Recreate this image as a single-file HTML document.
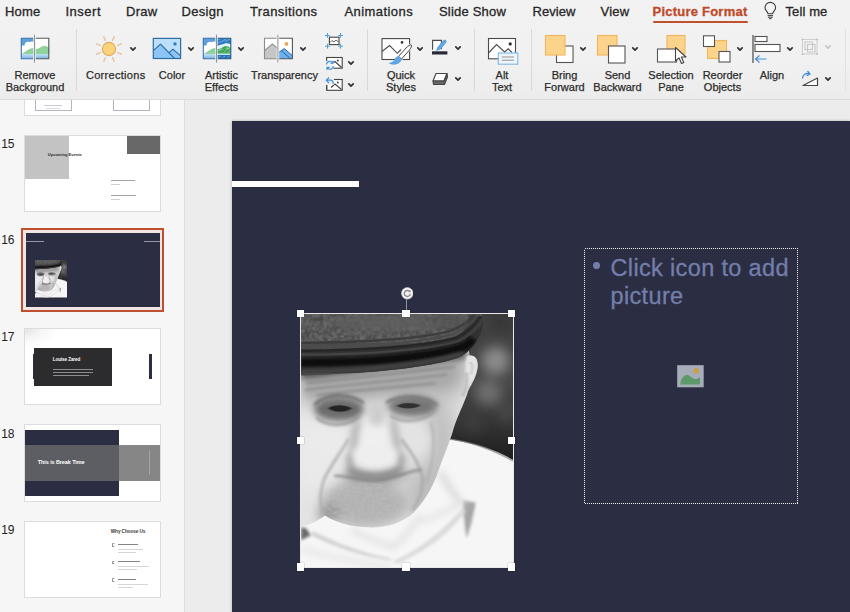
<!DOCTYPE html>
<html><head><meta charset="utf-8">
<style>
*{margin:0;padding:0;box-sizing:border-box}
html,body{width:850px;height:612px;overflow:hidden;background:#ececec;font-family:"Liberation Sans",sans-serif;color:#2a2a2a}
.abs{position:absolute}
#ribbon{position:absolute;left:0;top:0;width:850px;height:100px;box-sizing:border-box;background:linear-gradient(#f2f2f2 0,#f1f1f1 60px,#ececec 98px);border-bottom:1px solid #dcdcdc}
.tab{-webkit-text-stroke:0.300px;position:absolute;top:4px;font-size:13px;line-height:16px;white-space:nowrap;color:#262626}
.lbl{-webkit-text-stroke:0.250px #2b2b2b;margin-top:-.7px;position:absolute;font-size:11px;line-height:12.200px;text-align:center;white-space:nowrap;color:#2b2b2b;transform:translateX(-50%)}
.sep{position:absolute;top:29px;width:1px;height:62px;background:#d9d9d9}
.chev{position:absolute;width:8px;height:5px}
#panel{position:absolute;left:0;top:100px;width:184.800px;height:512px;background:#f6f6f6;border-right:1px solid #dedede;overflow:hidden}
.num{position:absolute;left:1.300px;font-size:12px;line-height:14px;color:#222;letter-spacing:-.2px}
.tiny{white-space:nowrap;line-height:1;letter-spacing:-.1px}
.ic{width:3.600px;height:3.600px;border:.8px solid #8c8c8c;border-radius:50%;border-right-color:transparent}
.thumb{position:absolute;left:25.300px;width:135px;height:75.800px;background:#fff;outline:1px solid #dcdcdc;outline-offset:-.5px;overflow:hidden}
#edit{position:absolute;left:185px;top:100px;width:665px;height:512px;background:#ececec}
#slide{position:absolute;left:232px;top:121px;width:618px;height:491px;background:#2b2e42;box-shadow:0 0 3px rgba(0,0,0,.25)}
.hd{position:absolute;width:7.500px;height:7.500px;background:#fff;box-shadow:0 0 1px rgba(0,0,0,.5)}
</style></head><body>
<svg width="0" height="0" style="position:absolute"><defs><g id="photo">
<defs>
<filter id="b1" x="-20%" y="-20%" width="140%" height="140%"><feGaussianBlur stdDeviation="0.800"/></filter>
<filter id="b2" x="-20%" y="-20%" width="140%" height="140%"><feGaussianBlur stdDeviation="1.800"/></filter>
<filter id="b3" x="-30%" y="-30%" width="160%" height="160%"><feGaussianBlur stdDeviation="3.500"/></filter>
<filter id="b6" x="-40%" y="-40%" width="180%" height="180%"><feGaussianBlur stdDeviation="6"/></filter>
<filter id="b10" x="-50%" y="-50%" width="200%" height="200%"><feGaussianBlur stdDeviation="10"/></filter>
<filter id="grain" x="0" y="0" width="100%" height="100%"><feTurbulence type="fractalNoise" baseFrequency=".280" numOctaves="3" seed="4" result="n"/><feColorMatrix in="n" type="matrix" values="0 0 0 0 .55  0 0 0 0 .55  0 0 0 0 .55  1.200 1.200 1.200 0 -1.400"/></filter>
<filter id="grain2" x="0" y="0" width="100%" height="100%"><feTurbulence type="fractalNoise" baseFrequency=".220" numOctaves="3" seed="9" result="n"/><feColorMatrix in="n" type="matrix" values="0 0 0 0 .33  0 0 0 0 .33  0 0 0 0 .33  1.200 1.200 1.200 0 -1.350"/></filter>
<linearGradient id="bgg" x1="0" y1="0" x2="0" y2="1"><stop offset="0" stop-color="#3f3f3f"/><stop offset=".45" stop-color="#484848"/><stop offset=".75" stop-color="#333"/><stop offset="1" stop-color="#1a1a1a"/></linearGradient>
<clipPath id="pc"><rect width="213" height="256"/></clipPath>
<clipPath id="facec"><path d="M0 50 L168 36 L169 43 C176 42 179 50 176 60 C173 71 168 75 166.500 82 C163 92 157 104 153 116 C150 128 143 144 138 158 C133 174 124 190 112 202 C100 212 84 217 66 216 C46 215 34 210 24 204 C16 210 8 214 0 215z"/></clipPath>
</defs>
<g clip-path="url(#pc)">
<rect width="213" height="256" fill="#efefef"/>
<!-- background -->
<rect x="130" y="0" width="83" height="152" fill="url(#bgg)"/>
<g filter="url(#b6)"><circle cx="195" cy="48" r="14" fill="#8a8a8a"/><circle cx="188" cy="80" r="13" fill="#6e6e6e"/><circle cx="206" cy="100" r="9" fill="#484848"/><circle cx="202" cy="10" r="12" fill="#383838"/><circle cx="172" cy="110" r="10" fill="#3c3c3c"/></g>
<!-- shirt -->
<path d="M120 124 C160 126.500 195 137 214 149 V256 H0 V200z" fill="#f6f6f6"/>
<path d="M146 127 C170 129 196 139 214 150" fill="none" stroke="#8a8a8a" stroke-width="1.200" filter="url(#b1)"/>
<!-- collar shading -->
<g filter="url(#b2)">
<path d="M162 189 L175 191 C173 204 170 216 166 227 C164 215 163 203 162 189z" fill="#a6a6a6"/>
<path d="M0 216 L5 217 L10 224 L0 229z" fill="#6a6a6a"/>
<path d="M12 220 C36 232 62 242 88 247 L92 250 C62 246 34 236 10 224z" fill="#d2d2d2"/>
<path d="M92 250 C120 238 146 216 162 196 L165 200 C150 222 122 242 96 253z" fill="#dcdcdc"/>
</g>
<g filter="url(#b3)" fill="none" stroke="#cdcdcd" stroke-width="3">
<path d="M140 160 C147 175 154 186 163 193" stroke="#dcdcdc" stroke-width="7"/>
<path d="M50 219 C66 226 80 232 92 236 C102 228 112 216 120 204" stroke="#e0e0e0" stroke-width="5"/>
<path d="M0 238 C30 246 60 252 90 256" stroke="#e8e8e8" stroke-width="6"/>
<path d="M120 210 C135 205 150 198 160 192" stroke="#e6e6e6" stroke-width="6"/>
</g>
<!-- face -->
<g clip-path="url(#facec)">
<rect width="213" height="256" fill="#e3e3e3"/>
<g filter="url(#b10)">
<ellipse cx="14" cy="140" rx="24" ry="44" fill="#eaeaea"/>
<ellipse cx="141" cy="130" rx="14" ry="48" fill="#bcbcbc"/>
<ellipse cx="122" cy="182" rx="17" ry="28" fill="#bababa"/>
<ellipse cx="152" cy="72" rx="14" ry="20" fill="#dadada"/>
<path d="M0 56 L166 36 L162 78 L0 92z" fill="#a2a2a2"/>
</g>
<g filter="url(#b6)">
<ellipse cx="73" cy="130" rx="20" ry="26" fill="#efefef"/>
<ellipse cx="117" cy="128" rx="13" ry="15" fill="#e4e4e4"/>
<ellipse cx="30" cy="130" rx="18" ry="16" fill="#ebebeb"/>
<ellipse cx="64" cy="192" rx="44" ry="24" fill="#b2b2b2"/>
<ellipse cx="75" cy="164" rx="34" ry="7" fill="#a8a8a8"/>
<ellipse cx="28" cy="202" rx="10" ry="9" fill="#8c8c8c"/>
</g>
<g filter="url(#b3)">
<path d="M0 60 L166 38 L166 45 L0 67z" fill="#3a3a3a"/>
<path d="M4 70 L150 54 L146 72 L6 84z" fill="#ababab"/>
<ellipse cx="38" cy="97" rx="25" ry="12" fill="#6c6c6c"/>
<ellipse cx="112" cy="94" rx="25" ry="11" fill="#747474"/>
<ellipse cx="76" cy="102" rx="9" ry="12" fill="#cdcdcd"/>
<path d="M48 154 C60 164 88 164 100 153 L102 160 C88 169 60 169 46 161z" fill="#7a7a7a"/>
<ellipse cx="50" cy="148" rx="4" ry="8" fill="#9a9a9a"/><path d="M54 108 C50 118 50 128 48 138 L56 138 C56 128 58 118 60 108z" fill="#b0b0b0"/><path d="M94 106 C98 118 99 128 101 138 L94 138 C92 128 91 118 89 108z" fill="#b0b0b0"/>
<ellipse cx="100" cy="148" rx="4" ry="8" fill="#9a9a9a"/>
</g>
<g filter="url(#b3)"><ellipse cx="74" cy="145" rx="22" ry="12" fill="#eeeeee"/></g>
<g filter="url(#b2)" fill="none" stroke-linecap="round">
<path d="M14 92 C26 81 48 81 62 90" stroke="#6a6a6a" stroke-width="2.500"/>
<path d="M86 90 C100 82 122 83 136 92" stroke="#757575" stroke-width="2.500"/>
<path d="M16 106 C28 116 48 114 58 104" stroke="#929292" stroke-width="2.200"/>
<path d="M90 104 C104 112 122 109 132 100" stroke="#9a9a9a" stroke-width="2.200"/>
<path d="M47 128 C38 144 28 156 23 168 C19 180 18 190 22 200" stroke="#acacac" stroke-width="2.400"/>
<path d="M101 128 C112 142 120 154 122 168 C122 180 118 190 112 198" stroke="#a8a8a8" stroke-width="2.400"/>
<path d="M34 164 C46 164 58 169 76 168.500 C92 168 104 160 120 158" stroke="#808080" stroke-width="2.200"/>
<path d="M6 71 C40 67 100 61 154 54M4 77.500 C50 72 100 67.500 146 62M16 83 C50 78 90 75.500 134 71" stroke="#767676" stroke-width="1.300"/>
<path d="M130 110 C136 130 132 150 126 170" stroke="#b0b0b0" stroke-width="2"/>
</g>
<g filter="url(#b1)">
<path d="M27 96 C32 92 44 92 51 96 C46 100.500 33 101 27 96z" fill="#1e1e1e" opacity=".92"/>
<path d="M96 93.500 C102 90 112 90 120 93 C114 97 102 97.500 96 93.500z" fill="#2a2a2a" opacity=".9"/>
<path d="M166 44 C172 40 178 44 177 54 C176 64 171 70 167 74 C165 64 164 52 166 44z" fill="#e4e4e4"/><path d="M169 50 C172 50 173 56 170 62" stroke="#bdbdbd" stroke-width="1.500" fill="none"/>
<path d="M166 60 C168 68 166 76 162 84" stroke="#b8b8b8" stroke-width="2" fill="none"/>
</g>
<clipPath id="chinc"><ellipse cx="64" cy="193" rx="42" ry="22"/></clipPath><g clip-path="url(#chinc)"><rect x="14" y="166" width="106" height="52" filter="url(#grain)" opacity=".4"/></g>

</g>
<!-- hat -->
<path id="hatp" d="M0 0 H180.500 C184 8 183 18 177 27 C172 35 166 41 160 44 C140 52 100 57 60 60 C30 62 10 63 0 63z" fill="#4b4b4b"/>
<clipPath id="hatc"><use href="#hatp"/></clipPath>
<g clip-path="url(#hatc)">
<rect width="190" height="30" filter="url(#grain2)" opacity=".4"/>
<g filter="url(#b6)"><ellipse cx="85" cy="9" rx="55" ry="8" fill="#5e5e5e"/><ellipse cx="150" cy="8" rx="20" ry="8" fill="#545454"/></g>
<g filter="url(#b1)" fill="none">
<path d="M0 51 C60 51 120 47 156 37 C170 32 179 22 182 4" stroke="#303030" stroke-width="25"/>
</g>
<g filter="url(#b1)" fill="none">
<path d="M0 30 C60 30 120 26 150 18 C165 12 172 6 175 -2" stroke="#3c3c3c" stroke-width="2.500"/>
<path d="M0 34 C60 34 121 30 152 21.500 C166 15.500 174 8 178 0" stroke="#4c4c4c" stroke-width="2.500"/>
<path d="M0 38 C60 38 122 34 155 25 C168 19 176 11 180 3" stroke="#262626" stroke-width="2.500"/>
<path d="M0 42 C60 42 124 38 158 28.500 C170 22 178 14 182 6" stroke="#454545" stroke-width="2.200"/>
</g>
<g filter="url(#b2)" fill="none">
<path d="M0 50 C60 50 120 46 160 35 C166 33 170 30 173 26" stroke="#0c0c0c" stroke-width="9"/>
<path d="M0 59.500 C60 58.500 120 52.500 162 41" stroke="#444" stroke-width="4"/>
</g>
</g>
</g>
</g></defs></svg>
<div id="ribbon">
<div class="tab" style="left:5px;letter-spacing:0.2px">Home</div>
<div class="tab" style="left:65.5px;letter-spacing:0.5px">Insert</div>
<div class="tab" style="left:126px;letter-spacing:0.3px">Draw</div>
<div class="tab" style="left:181.5px;letter-spacing:0.32px">Design</div>
<div class="tab" style="left:250px;letter-spacing:0.39px">Transitions</div>
<div class="tab" style="left:344.5px;letter-spacing:0.43px">Animations</div>
<div class="tab" style="left:439px;letter-spacing:0.2px">Slide Show</div>
<div class="tab" style="left:532.5px;letter-spacing:0.07px">Review</div>
<div class="tab" style="left:600.5px;letter-spacing:0.2px">View</div>
<div class="tab" id="pf" style="left:652.5px;letter-spacing:0.23px;font-weight:bold;color:#bf4a2a">Picture Format</div>
<div class="abs" style="left:652.500px;top:20.800px;width:95.500px;height:2.700px;border-radius:1.500px;background:#c0502e"></div>
<svg class="abs" style="left:763px;top:1px" width="15" height="19" viewBox="0 0 15 19"><path d="M5 12.800C5 10.900 2 9.700 2 6.700A5.300 5.300 0 0 1 12.600 6.700C12.600 9.700 9.600 10.900 9.600 12.800z" fill="none" stroke="#3c3c3c" stroke-width="1.100" stroke-linejoin="round"/><path d="M5 14.600H9.600M5.300 16.200H9.300M6.400 17.700H8.200" stroke="#3c3c3c" stroke-width="1" fill="none" stroke-linecap="round"/></svg>
<div class="tab" style="left:785.5px;letter-spacing:0.11px">Tell me</div>
<svg class="abs" style="left:20px;top:33px" width="31" height="31" viewBox="0 0 31 31">
<defs><linearGradient id="wat" x1="0" y1="0" x2="0" y2="1"><stop offset="0" stop-color="#c4e6f3"/><stop offset="1" stop-color="#7fb1e2"/></linearGradient></defs>
<rect x="1.300" y="5.200" width="27.500" height="20.500" fill="#fff"/>
<rect x="1.300" y="5.200" width="13.200" height="7.500" fill="#5e9fd8"/>
<path d="M1.300 12.800 H4.600 C4.200 9.300 7.500 8 9.500 9.200 C11 8 13.500 8.500 14.500 10 V17 H1.300z" fill="#fff"/>
<path d="M2.500 21 C6 18.500 9 16.500 12 15.600 L14.500 15.700 V21z" fill="#8fd39b" stroke="#6dbb7c" stroke-width=".5"/>
<path d="M14.500 16.200 C17 16.500 18.500 16 20 15 C22 13.500 24 12.800 25.500 13.300 L28.800 14.800 V21 H14.500z" fill="#8fd39b" stroke="#6dbb7c" stroke-width=".5"/>
<rect x="1.300" y="20.800" width="27.500" height="4.900" fill="url(#wat)"/>
<path d="M14.500 5.200 H28.800 V25.700 H14.500" fill="none" stroke="#4f5860" stroke-width="1.100"/>
<path d="M14.500 5.200 H1.300 V25.700 H14.500" fill="none" stroke="#3a74ad" stroke-width="1.100"/>
<path d="M14.500 1.700V29.600" stroke="#f1f1f1" stroke-width="2.600"/>
<path d="M14.500 1.700V29.600" stroke="#8d9296" stroke-width="1"/>
</svg>
<div class="lbl" style="left:35px;top:69.5px">Remove<br>Background</div>
<div class="sep" style="left:76px"></div>
<svg class="abs" style="left:93.300px;top:32.800px" width="32" height="32" viewBox="-16 -16 32 32">
<g stroke="#e9c6a6" stroke-width="1.600" stroke-linecap="round">
<path d="M0 -9.500V-13.300M0 9.500V13.300M-9.500 0H-13.300M9.500 0H13.300M6.700 -6.700L9.400 -9.400M-6.700 -6.700L-9.400 -9.400M6.700 6.700L9.400 9.400M-6.700 6.700L-9.400 9.400" transform="rotate(22.500)"/>
</g>
<circle r="6.600" fill="#fad37c" stroke="#e0a95c" stroke-width="1.100"/>
</svg>
<svg class="abs" style="left:129px;top:46px" width="8" height="6" viewBox="0 0 8 6"><path d="M1.800 1.900L4 4.100L6.200 1.900" fill="none" stroke="#303030" stroke-width="1.700" stroke-linecap="round" stroke-linejoin="round"/></svg>
<div class="lbl" style="left:115.700px;top:69.5px;letter-spacing:.3px">Corrections</div>
<svg class="abs" style="left:152px;top:36px" width="31" height="24" viewBox="0 0 31 24">
<rect x="1.300" y="2.400" width="27.300" height="20.100" fill="#bcdffb"/>
<path d="M1.300 14.600 L8.500 8.100 L22.600 22.500 H1.300z" fill="#8dc6f6"/>
<path d="M17.300 16.300 L20.900 13.200 L28.600 19.900 V22.500 H22.600z" fill="#8dc6f6"/>
<path d="M1.300 14.600 L8.500 8.100 L22.600 22.500M17.300 16.300 L20.900 13.200 L28.600 19.900" fill="none" stroke="#2f6da3" stroke-width="1.100" stroke-linejoin="round"/>
<rect x="1.300" y="2.400" width="27.300" height="20.100" fill="none" stroke="#2f6da3" stroke-width="1.200"/>
<circle cx="23" cy="7.900" r="1.700" fill="#2e7cb6"/>
</svg>
<svg class="abs" style="left:186.5px;top:46px" width="8" height="6" viewBox="0 0 8 6"><path d="M1.800 1.900L4 4.100L6.200 1.900" fill="none" stroke="#303030" stroke-width="1.700" stroke-linecap="round" stroke-linejoin="round"/></svg>
<div class="lbl" style="left:172px;top:69.5px">Color</div>
<svg class="abs" style="left:201.700px;top:33px" width="31" height="31" viewBox="0 0 31 31">
<rect x="1.300" y="5.200" width="27.500" height="20.500" fill="#fff"/>
<rect x="1.300" y="5.200" width="13.200" height="7.500" fill="#5e9fd8"/>
<path d="M1.300 12.800 H4.600 C4.200 9.300 7.500 8 9.500 9.200 C11 8 13.500 8.500 14.500 10 V17 H1.300z" fill="#fff"/>
<path d="M2.500 21 C6 18.500 9 16.500 12 15.600 L14.500 15.700 V21z" fill="#8fd39b" stroke="#6dbb7c" stroke-width=".5"/>
<rect x="1.300" y="20.800" width="13.200" height="4.900" fill="url(#wat)"/>
<rect x="14.500" y="5.200" width="14.300" height="20.500" fill="#2f78bd"/>
<path d="M15 7l4-1.500 M19 9l5-3 M23 8.500l5-2.500M16 10l3-1.500" stroke="#5fa5e2" stroke-width="1.100"/>
<path d="M14.500 13.500 C17 12 20 11.500 23 10.500 C25 10 27 10.500 28.800 11.500 V16 H14.500z" fill="#e2f3fb"/>
<path d="M14.500 17 C17 16.500 18.500 15.500 20.500 14.300 C22.500 13 24.500 12.800 26 13.500 L28.800 15 V21 H14.500z" fill="#58b46a"/>
<path d="M16 19.500l4-2.500M19.500 19.500l4-3.500M23.500 19.500l3.500-3M21 15.500l3-1.500" stroke="#2f8f4c" stroke-width=".9"/>
<path d="M17 17.500l3-1.500M24 15l3 1" stroke="#a5e0a4" stroke-width=".8"/>
<rect x="14.500" y="20.600" width="14.300" height="1.400" fill="#bfe9f3"/>
<rect x="14.500" y="22" width="14.300" height="3.700" fill="#2a6fb2"/>
<path d="M16 24.500l3-1.500M20.500 24.500l3-1.500M25 24.500l2.500-1.500" stroke="#6fb0e6" stroke-width=".8"/>
<path d="M14.500 5.200 H28.800 V25.700 H14.500" fill="none" stroke="#2b5f90" stroke-width="1.100"/>
<path d="M14.500 5.200 H1.300 V25.700 H14.500" fill="none" stroke="#3a74ad" stroke-width="1.100"/>
<path d="M14.500 1.700V29.600" stroke="#e6eef5" stroke-width="2.400"/>
<path d="M14.500 1.700V29.600" stroke="#8d9296" stroke-width="1"/>
</svg>
<svg class="abs" style="left:236.5px;top:46px" width="8" height="6" viewBox="0 0 8 6"><path d="M1.800 1.900L4 4.100L6.200 1.900" fill="none" stroke="#303030" stroke-width="1.700" stroke-linecap="round" stroke-linejoin="round"/></svg>
<div class="lbl" style="left:221.5px;top:69.5px">Artistic<br>Effects</div>
<svg class="abs" style="left:263px;top:33px" width="31" height="31" viewBox="0 0 31 31">
<rect x="1.500" y="5.200" width="27.900" height="20.500" fill="#fff"/>
<path d="M1.500 17.600 L9.300 10.900 L14.900 15.700 V25.700 H1.500z" fill="#c6c6c6"/>
<path d="M1.500 17.600 L9.300 10.900 L14.900 15.700" fill="none" stroke="#8b8b8b" stroke-width="1.100"/>
<path d="M15.500 19.600 L21.300 15.600 L29.400 22.700 V25.700 H15.500z" fill="#6db1ef"/>
<path d="M15.500 19.600 L21.300 15.600 L29.400 22.700M18.300 17.700 L27.500 25.700" fill="none" stroke="#2768a8" stroke-width="1"/>
<circle cx="23.400" cy="10.900" r="1.900" fill="#eaa45a"/>
<path d="M14.900 5.200 H29.400 V25.700 H14.900" fill="none" stroke="#50565c" stroke-width="1.100"/>
<path d="M14.900 5.200 H1.500 V25.700 H14.900" fill="none" stroke="#8b8b8b" stroke-width="1.100"/>
<path d="M14.900 1.700V29.600" stroke="#f1f1f1" stroke-width="2.600"/>
<path d="M14.900 1.700V29.600" stroke="#9a9a9a" stroke-width="1"/>
</svg>
<svg class="abs" style="left:298.5px;top:46px" width="8" height="6" viewBox="0 0 8 6"><path d="M1.800 1.900L4 4.100L6.200 1.900" fill="none" stroke="#303030" stroke-width="1.700" stroke-linecap="round" stroke-linejoin="round"/></svg>
<div class="lbl" style="left:284.5px;top:69.5px">Transparency</div>
<svg class="abs" style="left:325px;top:33px" width="18" height="16" viewBox="0 0 18 16">
<rect x="4.400" y="4.200" width="9.600" height="7.400" fill="#fff" stroke="#444" stroke-width="1.100"/>
<path d="M5 9.500l2-2 2 1.500 2-2 2.500 2" fill="none" stroke="#555" stroke-width=".9"/>
<g stroke="#4ea0dc" stroke-width="1" fill="none"><path d="M0 2.500h4.800M2.500 0v4.800M13.200 2.500h4.800M15.500 0v4.800M0 13.200h4.800M2.500 10.800v4.800M13.200 13.200h4.800M15.500 10.800v4.800"/></g>
</svg>
<svg class="abs" style="left:325px;top:55px" width="18" height="17" viewBox="0 0 18 17">
<rect x="1.700" y="2.500" width="15.500" height="10.700" fill="#fff" stroke="#444" stroke-width="1.100"/>
<path d="M7 8.500 L10 6.500 L16.500 12.500" fill="none" stroke="#444" stroke-width="1.100"/><circle cx="12.800" cy="5.500" r="1" fill="#444"/>
<rect x="0.500" y="5.500" width="8" height="10" fill="#f1f1f1"/>
<rect x="1.700" y="2.500" width="7" height="3.500" fill="#fff"/><path d="M1.700 6V2.500H9" fill="none" stroke="#444" stroke-width="1.100"/>
<path d="M1.500 9.500a3.300 3.300 0 0 1 6-1.800M8 5.500v2.600H5.400" fill="none" stroke="#3f8fe0" stroke-width="1.200"/>
<path d="M8.500 11a3.300 3.300 0 0 1-6 1.800M2 15v-2.600h2.600" fill="none" stroke="#3f8fe0" stroke-width="1.200"/>
</svg>
<svg class="abs" style="left:325px;top:76px" width="18" height="16" viewBox="0 0 18 16">
<rect x="1.700" y="3.500" width="15.500" height="10.800" fill="#fff" stroke="#444" stroke-width="1.100"/>
<path d="M6 11.500 L10 8 L16.500 13.500" fill="none" stroke="#444" stroke-width="1.100"/><circle cx="12.800" cy="6.500" r="1" fill="#444"/>
<rect x="0.500" y="0" width="8.500" height="9" fill="#f1f1f1"/>
<path d="M9 3.500H17.200M1.700 9V14.300" stroke="#444" stroke-width="1.100"/>
<path d="M1.500 4.200H5.500C7.500 4.200 8.500 6 8 8M4 1.500L1.300 4.200L4 7" fill="none" stroke="#3f8fe0" stroke-width="1.200"/>
</svg>
<svg class="abs" style="left:347px;top:60px" width="8" height="6" viewBox="0 0 8 6"><path d="M1.800 1.900L4 4.100L6.200 1.900" fill="none" stroke="#303030" stroke-width="1.700" stroke-linecap="round" stroke-linejoin="round"/></svg>
<svg class="abs" style="left:347px;top:81.5px" width="8" height="6" viewBox="0 0 8 6"><path d="M1.800 1.900L4 4.100L6.200 1.900" fill="none" stroke="#303030" stroke-width="1.700" stroke-linecap="round" stroke-linejoin="round"/></svg>
<div class="sep" style="left:367px"></div>
<svg class="abs" style="left:380px;top:36px" width="34" height="30" viewBox="0 0 34 30">
<rect x="2" y="2.600" width="27.600" height="20.900" fill="#fff" stroke="#4a4a4a" stroke-width="1.100"/>
<path d="M2 15.500 L9.600 9.600 L17.300 17.300 L21 13.500" fill="none" stroke="#4a4a4a" stroke-width="1.100"/>
<circle cx="22" cy="6.400" r="1.300" fill="#333"/>
<path d="M31 9.300 L19 24" stroke="#f1f1f1" stroke-width="5"/>
<path d="M31.300 9 C32 10 31 12 29 14.500 L21.500 23 L18.500 20.500 L26 12 C28 10 30.500 8.500 31.300 9z" fill="#fff" stroke="#4a4a4a" stroke-width="1"/>
<path d="M21.300 23.200 C20.500 27.500 14 29.500 9.500 27.300 C12.500 27 14 25.500 15 23 C16 20.500 19.500 19.500 21.300 23.200z" fill="#62a8e4" stroke="#4b94d8" stroke-width=".7"/>
</svg>
<svg class="abs" style="left:415.5px;top:46px" width="8" height="6" viewBox="0 0 8 6"><path d="M1.800 1.900L4 4.100L6.200 1.900" fill="none" stroke="#303030" stroke-width="1.700" stroke-linecap="round" stroke-linejoin="round"/></svg>
<div class="lbl" style="left:401px;top:69.5px">Quick<br>Styles</div>
<svg class="abs" style="left:431px;top:38px" width="18" height="18" viewBox="0 0 18 18">
<path d="M1.600 11.800V2.400H10.400V11.800" stroke="#4a4a4a" stroke-width="1.100" fill="#fff"/>
<path d="M4.500 13.300h8" stroke="#f1f1f1" stroke-width="4"/>
<path d="M6.800 9.300 L12.500 2.500 C13.500 1.200 16 2.800 15 4.300 L9.500 11 L5.700 12.300z" fill="#62a8e4" stroke="#4b94d8" stroke-width=".8"/>
<rect x="1" y="13.300" width="15.400" height="3.200" fill="#262a36"/>
</svg>
<svg class="abs" style="left:453.5px;top:44.5px" width="8" height="6" viewBox="0 0 8 6"><path d="M1.800 1.900L4 4.100L6.200 1.900" fill="none" stroke="#303030" stroke-width="1.700" stroke-linecap="round" stroke-linejoin="round"/></svg>
<svg class="abs" style="left:431px;top:71px" width="18" height="16" viewBox="0 0 18 16">
<path d="M5 2.500 L16 2.500 L13 10 L2 10z" fill="#fff" stroke="#444" stroke-width="1.100" stroke-linejoin="round"/>
<path d="M2 10 L13 10 L16 2.500 L16.500 6 L13.500 13.500 L2.500 13.500z" fill="#666" stroke="#444" stroke-width="1.100" stroke-linejoin="round"/>
</svg>
<svg class="abs" style="left:453.5px;top:76px" width="8" height="6" viewBox="0 0 8 6"><path d="M1.800 1.900L4 4.100L6.200 1.900" fill="none" stroke="#303030" stroke-width="1.700" stroke-linecap="round" stroke-linejoin="round"/></svg>
<div class="sep" style="left:473.5px"></div>
<svg class="abs" style="left:486px;top:36px" width="34" height="30" viewBox="0 0 34 30">
<rect x="2.500" y="2.500" width="27" height="20.300" fill="#fff" stroke="#4a4a4a" stroke-width="1.100"/>
<path d="M3 16.500 L10.500 8.500 L18.700 16 L22.200 12.800 L26 16.500" fill="none" stroke="#4a4a4a" stroke-width="1.100"/>
<circle cx="24.200" cy="7.900" r="1.600" fill="#2c2c2c"/>
<rect x="12.300" y="17" width="19.500" height="11.200" fill="#edf6fd" stroke="#7db6e4" stroke-width="1.100"/>
<path d="M15.800 21h12.200M15.800 24.200h12.200" stroke="#9c8e86" stroke-width="1"/>
</svg>
<div class="lbl" style="left:502px;top:69.5px">Alt<br>Text</div>
<div class="sep" style="left:530.5px"></div>
<svg class="abs" style="left:544px;top:34px" width="31" height="30" viewBox="0 0 31 30">
<rect x="12.500" y="12" width="16.500" height="16.500" fill="#fff" stroke="#555" stroke-width="1.100"/>
<rect x="1.500" y="1.500" width="19.500" height="19.500" fill="#fbd38a" stroke="#f0b65e" stroke-width="1.100"/>
</svg>
<svg class="abs" style="left:578.5px;top:46px" width="8" height="6" viewBox="0 0 8 6"><path d="M1.800 1.900L4 4.100L6.200 1.900" fill="none" stroke="#303030" stroke-width="1.700" stroke-linecap="round" stroke-linejoin="round"/></svg>
<div class="lbl" style="left:564.5px;top:69.5px">Bring<br>Forward</div>
<svg class="abs" style="left:596px;top:34px" width="31" height="31" viewBox="0 0 31 31">
<rect x="1.500" y="1.500" width="19.500" height="19.500" fill="#fbd38a" stroke="#f0b65e" stroke-width="1.100"/>
<rect x="12.500" y="12" width="16.500" height="17" fill="#fff" stroke="#555" stroke-width="1.100"/>
</svg>
<svg class="abs" style="left:630.8px;top:46px" width="8" height="6" viewBox="0 0 8 6"><path d="M1.800 1.900L4 4.100L6.200 1.900" fill="none" stroke="#303030" stroke-width="1.700" stroke-linecap="round" stroke-linejoin="round"/></svg>
<div class="lbl" style="left:617.5px;top:69.5px">Send<br>Backward</div>
<svg class="abs" style="left:656px;top:34px" width="33" height="32" viewBox="0 0 33 32">
<rect x="11" y="1.500" width="18" height="18.500" fill="#fbd38a" stroke="#f0b65e" stroke-width="1.100"/>
<rect x="1.500" y="15" width="19" height="13" fill="#fff" stroke="#555" stroke-width="1.100"/>
<path d="M19.500 13.500 L19.500 27 L23 23.800 L25.500 29.500 L27.800 28.500 L25.300 23 L30 23z" fill="#fff" stroke="#444" stroke-width="1.100" stroke-linejoin="round"/>
</svg>
<div class="lbl" style="left:671px;top:69.5px">Selection<br>Pane</div>
<svg class="abs" style="left:702px;top:35px" width="30" height="29" viewBox="0 0 30 29">
<rect x="5.500" y="5.500" width="19" height="18" fill="#fbd38a" stroke="#f0b65e" stroke-width="1.100"/>
<rect x="1.500" y=".8" width="11" height="10.700" fill="#fff" stroke="#555" stroke-width="1.100"/>
<rect x="17" y="16.500" width="11" height="10.500" fill="#fff" stroke="#555" stroke-width="1.100"/>
</svg>
<svg class="abs" style="left:736px;top:46px" width="8" height="6" viewBox="0 0 8 6"><path d="M1.800 1.900L4 4.100L6.200 1.900" fill="none" stroke="#303030" stroke-width="1.700" stroke-linecap="round" stroke-linejoin="round"/></svg>
<div class="lbl" style="left:722.5px;top:69.5px">Reorder<br>Objects</div>
<svg class="abs" style="left:751px;top:34px" width="31" height="30" viewBox="0 0 31 30">
<path d="M2 1V29" stroke="#555" stroke-width="1.300"/>
<rect x="4" y="2.500" width="12" height="5" fill="#fff" stroke="#555" stroke-width="1.100"/>
<rect x="4" y="10.500" width="25" height="7" fill="#fff" stroke="#555" stroke-width="1.100"/>
<path d="M4.500 25H15.500M8.500 21.500L4.500 25L8.500 28.500" fill="none" stroke="#3f8fe0" stroke-width="1.200"/>
</svg>
<svg class="abs" style="left:786px;top:46px" width="8" height="6" viewBox="0 0 8 6"><path d="M1.800 1.900L4 4.100L6.200 1.900" fill="none" stroke="#303030" stroke-width="1.700" stroke-linecap="round" stroke-linejoin="round"/></svg>
<div class="lbl" style="left:772px;top:69.5px">Align</div>
<svg class="abs" style="left:800px;top:37px" width="20" height="20" viewBox="0 0 20 20">
<g stroke="#c6c6c6" fill="none" stroke-width="1"><rect x="2.500" y="2.500" width="14.500" height="14.500" stroke-width=".8"/><rect x="5" y="5" width="7.500" height="7.500"/><rect x="7.500" y="7.500" width="7.500" height="7.500"/>
<path d="M1.500 2.500h2M2.500 1.500v2M16 2.500h2M17 1.500v2M1.500 17h2M2.500 16v2M16 17h2M17 16v2" stroke="#bdbdbd"/></g>
</svg>
<svg class="abs" style="left:824px;top:44px" width="8" height="6" viewBox="0 0 8 6"><path d="M1.800 1.900L4 4.100L6.200 1.900" fill="none" stroke="#c6c6c6" stroke-width="1.700" stroke-linecap="round" stroke-linejoin="round"/></svg>
<svg class="abs" style="left:800px;top:70px" width="20" height="17" viewBox="0 0 20 17">
<path d="M3 15.500 L17.500 15.500 L17.500 8z" fill="#fff" stroke="#444" stroke-width="1.200" stroke-linejoin="round"/>
<path d="M2.500 8.500 C2.500 4.500 6 2.500 9.500 4M7.500 1L10 4L6.800 5.800" fill="none" stroke="#3f8fe0" stroke-width="1.300"/>
</svg>
<svg class="abs" style="left:824px;top:76px" width="8" height="6" viewBox="0 0 8 6"><path d="M1.800 1.900L4 4.100L6.200 1.900" fill="none" stroke="#303030" stroke-width="1.700" stroke-linecap="round" stroke-linejoin="round"/></svg>
<div class="sep" style="left:845px;background:#e2e2e2"></div>
</div>
<div id="panel"><div class="abs" style="left:0;top:1px;width:184px;height:511px">
<!-- coordinates relative to panel top=101 -->
<div class="thumb" style="top:-60.400px;height:74px">
 <div class="abs" style="left:10px;top:50px;width:37px;height:20px;border:1px solid #b4b4be;border-top:0"></div>
 <div class="abs" style="left:88px;top:50px;width:37px;height:20px;border:1px solid #b4b4be;border-top:0"></div>
 <div class="abs" style="left:19px;top:64.500px;width:18px;height:1px;background:#c9c9c9"></div>
 <div class="abs" style="left:21px;top:67px;width:14px;height:1px;background:#dcdcdc"></div>
</div>
<div class="num" style="top:35.8px">15</div>
<div class="thumb" style="top:34.600px">
 <div class="abs" style="left:0;top:0;width:43.500px;height:43.500px;background:#c3c3c3"></div>
 <div class="abs" style="left:102px;top:0;width:33px;height:18.500px;background:#686868"></div>
 <div class="abs tiny" style="left:22.500px;top:17.500px;font-size:4.200px;font-weight:bold;color:#333">Upcoming Events</div>
 <div class="abs" style="left:85.500px;top:44px;width:24px;height:.8px;background:#a2a2a2"></div>
 <div class="abs" style="left:85.500px;top:48px;width:9px;height:1px;background:#d0d0d0"></div>
 <div class="abs" style="left:85.500px;top:59.500px;width:25px;height:.8px;background:#a2a2a2"></div>
 <div class="abs" style="left:85.500px;top:63.500px;width:9px;height:1px;background:#d0d0d0"></div>
</div>
<div class="num" style="top:132.3px">16</div>
<div class="abs" style="left:21.100px;top:126.800px;width:143.300px;height:84px;background:#bf4f30"><div class="abs" style="left:2.300px;top:2.300px;right:2.300px;bottom:2.300px;background:#f1e6e2"></div></div>
<div class="abs" style="left:26px;top:131.700px;width:134px;height:74.600px;background:#2b2e42;overflow:hidden">
 <div class="abs" style="left:0;top:8.500px;width:17.500px;height:1px;background:#9497a6"></div>
 <div class="abs" style="left:117.500px;top:8.500px;width:17px;height:1px;background:#9497a6"></div>
 <svg class="abs" style="left:8.500px;top:27.500px" width="32" height="37.600" viewBox="0 0 213 256" preserveAspectRatio="none"><use href="#photo"/></svg>
</div>
<div class="num" style="top:229.3px">17</div>
<div class="thumb" style="top:227.500px">
 <div class="abs" style="left:0;top:0;width:40px;height:22px;background:radial-gradient(ellipse at 0 0,#e4e4e4 0,#f6f6f6 30%,#fff 60%)"></div>
 <div class="abs" style="left:8px;top:25px;width:2px;height:25.500px;background:#2b2e42"></div>
 <div class="abs" style="left:9px;top:19.500px;width:78px;height:37.500px;background:#2c2c2e"></div>
 <div class="abs tiny" style="left:27.500px;top:29px;font-size:4.600px;font-weight:bold;color:#fff">Louise Zared</div>
 <div class="abs" style="left:27.500px;top:40.500px;width:40px;height:.8px;background:#8d8d8f"></div>
 <div class="abs" style="left:27.500px;top:43.500px;width:40px;height:.8px;background:#8d8d8f"></div>
 <div class="abs" style="left:27.500px;top:46.500px;width:36px;height:.8px;background:#8d8d8f"></div>
 <div class="abs" style="left:123.500px;top:25px;width:3px;height:25.500px;background:#2b2e42"></div>
</div>
<div class="num" style="top:325.8px">18</div>
<div class="thumb" style="top:324.200px">
 <div class="abs" style="left:0;top:4.500px;width:94px;height:66px;background:#2b2e42"></div>
 <div class="abs" style="left:0;top:20px;width:135px;height:35.500px;background:rgba(105,105,107,.82)"></div>
 <div class="abs" style="left:94px;top:20px;width:41px;height:35.500px;background:#868686"></div>
 <div class="abs tiny" style="left:12.500px;top:34.500px;font-size:5.500px;font-weight:bold;color:#fff">This is Break Time</div>
 <div class="abs" style="left:123.500px;top:25px;width:1px;height:25px;background:#a4a4a4"></div>
</div>
<div class="num" style="top:422.1px">19</div>
<div class="thumb" style="top:420.700px">
 <div class="abs tiny" style="left:85.500px;top:8.500px;font-size:4.700px;font-weight:bold;color:#3a3a3a">Why Choose Us</div>
 <div class="abs ic" style="left:86.500px;top:21.500px"></div>
 <div class="abs" style="left:93px;top:22px;width:20px;height:.9px;background:#858585"></div>
 <div class="abs" style="left:93px;top:27.500px;width:25px;height:.8px;background:#d6d6d6"></div>
 <div class="abs" style="left:93px;top:30.500px;width:18px;height:.8px;background:#d6d6d6"></div>
 <div class="abs ic" style="left:86.500px;top:39px"></div>
 <div class="abs" style="left:93px;top:39.500px;width:22px;height:.9px;background:#858585"></div>
 <div class="abs" style="left:93px;top:44.500px;width:31px;height:.8px;background:#d6d6d6"></div>
 <div class="abs" style="left:93px;top:47.700px;width:19px;height:.8px;background:#d6d6d6"></div>
 <div class="abs ic" style="left:86.500px;top:56.500px"></div>
 <div class="abs" style="left:93px;top:57.300px;width:18px;height:.9px;background:#858585"></div>
 <div class="abs" style="left:93px;top:62px;width:30px;height:.8px;background:#d6d6d6"></div>
 <div class="abs" style="left:93px;top:65px;width:15px;height:.8px;background:#d6d6d6"></div>
</div>
</div></div>
<div id="edit"></div>
<div id="slide">
<!-- coords relative to slide origin (232,121) -->
<div class="abs" style="left:0;top:60px;width:127px;height:5.600px;background:#fff"></div>
<svg class="abs" style="left:351px;top:126px" width="217" height="259" viewBox="0 0 217 259" shape-rendering="crispEdges"><rect x="1.500" y="1.500" width="213" height="255" fill="none" stroke="#f0f0f0" stroke-width="1" stroke-dasharray="1 1"/></svg>
<div class="abs" style="left:361.300px;top:141px;width:7px;height:7px;border-radius:50%;background:#737eab"></div>
<div class="abs" id="ph" style="left:378.500px;top:132.700px;font-size:23.500px;line-height:28.300px;letter-spacing:.35px;color:#737eab;-webkit-text-stroke:.3px #737eab;white-space:nowrap">Click icon to add<br>picture</div>
<svg class="abs" style="left:445px;top:243.500px" width="27" height="23" viewBox="0 0 27 23">
<rect x=".2" y=".2" width="26.500" height="22.100" fill="#a7acb9"/>
<path d="M3.300 19.500 C3.500 14 7 10 10 9.700 C12.500 9.800 14.500 13 17.500 14 C20 14.500 22 13 23 12 V19.500z" fill="#5d9969"/>
<circle cx="19.200" cy="5.700" r="2.800" fill="#c6a244"/>
</svg>
<svg class="abs" style="left:68.500px;top:192px" width="212.500" height="254" viewBox="0 0 213 256" preserveAspectRatio="none"><use href="#photo"/></svg>
<div class="abs" style="left:68px;top:191.500px;width:214px;height:255px;border:1px solid #e9e9ec"></div>
<div class="abs" style="left:174.400px;top:178px;width:1px;height:13px;background:#8d91a0"></div>
<svg class="abs" style="left:168.600px;top:166.400px" width="12.600" height="12.600" viewBox="0 0 12.600 12.600"><circle cx="6.300" cy="6.300" r="5.800" fill="#f4f4f4" stroke="#c9c9c9" stroke-width=".6"/><path d="M8.700 4.600A3 3 0 1 0 9.300 6.800" fill="none" stroke="#8a8a8a" stroke-width="1.400"/><path d="M9.600 2.900V5.300H7.200z" fill="#8a8a8a"/></svg>
<div class="hd" style="left:64.85px;top:188.55px"></div>
<div class="hd" style="left:64.85px;top:442.25px"></div>
<div class="hd" style="left:170.45px;top:188.55px"></div>
<div class="hd" style="left:170.45px;top:442.25px"></div>
<div class="hd" style="left:275.75px;top:188.55px"></div>
<div class="hd" style="left:275.75px;top:442.25px"></div>
<div class="hd" style="left:64.85px;top:315.85px"></div>
<div class="hd" style="left:275.75px;top:315.85px"></div>
</div>
</body></html>
